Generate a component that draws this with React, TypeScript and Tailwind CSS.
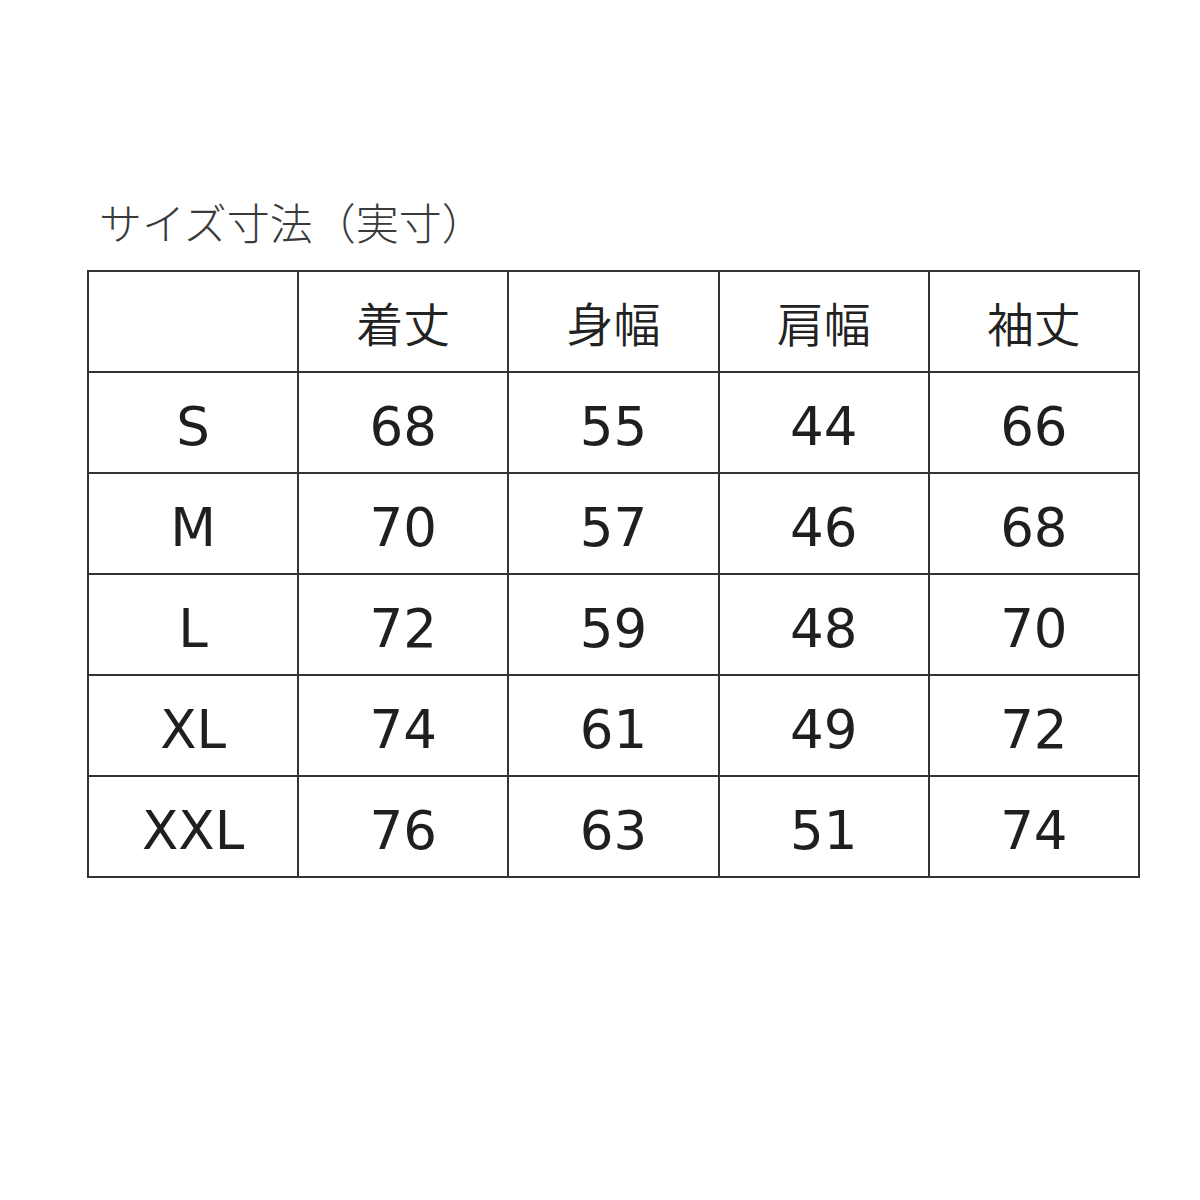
const headers = ["", "着丈", "身幅", "肩幅", "袖丈"];

const rows: [string, number, number, number, number][] = [
  ["S", 68, 55, 44, 66],
  ["M", 70, 57, 46, 68],
  ["L", 72, 59, 48, 70],
  ["XL", 74, 61, 49, 72],
  ["XXL", 76, 63, 51, 74],
];

const latin = { fontFamily: '"DejaVu Sans", "Noto Sans CJK JP", sans-serif' };
const jp = { fontFamily: '"Noto Sans CJK JP", sans-serif' };

export default function App() {
  return (
    <div className="w-[1200px] h-[1200px] bg-white text-[#222]" style={latin}>
      <div className="pt-[190px] pl-[99px] text-[43px] leading-[62px] text-[#3a3a3a] font-light" style={jp}>
        サイズ寸法（実寸）
      </div>
      <table className="ml-[87px] mt-[18px] w-[1053px] border-collapse table-fixed">
        <thead>
          <tr className="h-[101px]">
            {headers.map((h, i) => (
              <th key={i} className="border-2 border-[#333] text-[47px] font-[350] text-center align-middle pt-[2px]" style={jp}>
                {h}
              </th>
            ))}
          </tr>
        </thead>
        <tbody>
          {rows.map((r) => (
            <tr key={r[0]} className="h-[101px]">
              {r.map((c, i) => (
                <td key={i} className="border-2 border-[#333] text-[53px] leading-[60px] pt-[8px] font-normal text-center align-middle text-[#1f1f1f]">
                  {c}
                </td>
              ))}
            </tr>
          ))}
        </tbody>
      </table>
    </div>
  );
}
